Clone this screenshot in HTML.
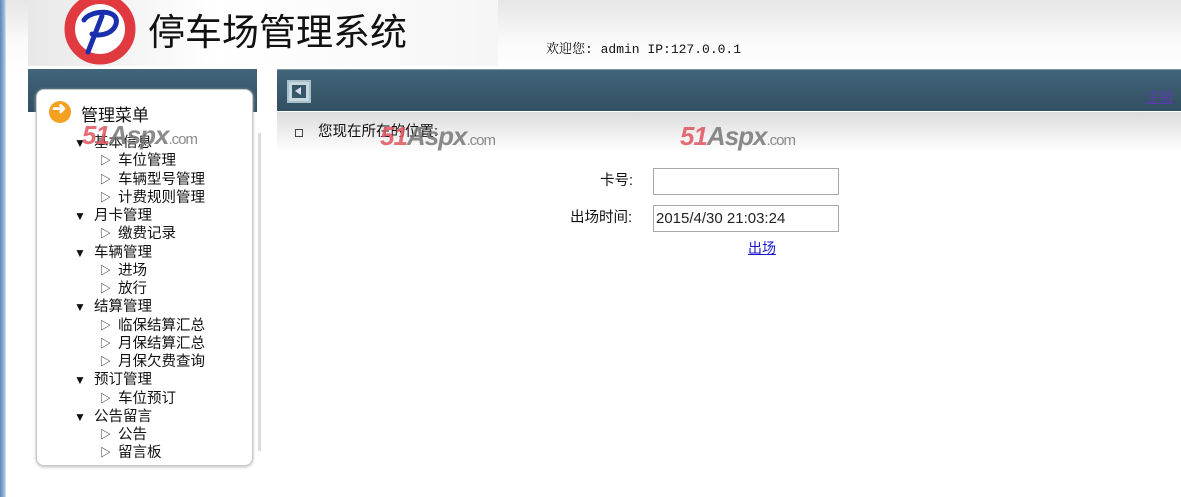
<!DOCTYPE html>
<html><head><meta charset="utf-8"><style>
*{margin:0;padding:0;box-sizing:border-box}
body{width:1181px;height:497px;position:relative;overflow:hidden;background:#fff;font-family:"Liberation Sans","Noto Sans CJK SC",sans-serif;}
.a{position:absolute}
.top{left:0;top:0;width:1181px;height:69px;background:linear-gradient(#e6e6e6,#fafafa 60%,#fff)}
.lstrip{left:0;top:0;width:6px;height:497px;background:linear-gradient(90deg,#5b86b8,#9bb8d8 70%,#dfe8f2)}
.bar{background:linear-gradient(#426579,#314f62);}
.t{font-size:14.5px;color:#111;line-height:18.2px;white-space:nowrap}
.r{position:relative;height:18.25px;font-size:14.5px;color:#111;line-height:18px;white-space:nowrap}
.r .tx{position:absolute;left:22px;top:0}
.r.s .tx{left:46px}
.r .tri{position:absolute;left:2px;top:0;font-size:12px;line-height:18px}
.r.s .tri{left:28px;font-size:11px}
.wm{position:absolute;font-family:"Liberation Sans",sans-serif;font-weight:bold;font-style:italic;font-size:26px;color:#e0555f;letter-spacing:-1px;opacity:.85}
.wm b{color:#777;font-style:italic}
.wm i{font-size:15px;color:#777;font-weight:normal;font-style:normal}
input{position:absolute;height:27px;border:1px solid #a9a9a9;font-family:"Liberation Sans",sans-serif;font-size:15px;padding-left:2px;color:#222}
</style></head><body>
<div class="a top"></div>
<div class="a lstrip"></div>
<div class="a" style="left:28px;top:0;width:470px;height:66px;background:linear-gradient(90deg,#e8e8e8,#fff 40%,#f6f6f6)"></div>
<svg class="a" style="left:62px;top:0" width="78" height="66" viewBox="0 0 78 66">
<circle cx="38" cy="29" r="30" fill="none" stroke="#e0393f" stroke-width="11"/>
<circle cx="38" cy="29" r="25" fill="#fff"/>
<path d="M22 20 C28 10 58 8 54 24 C50 36 34 36 30 34 M40 16 L26 52" stroke="#1a2fae" stroke-width="5" fill="none" stroke-linecap="round"/>
</svg>
<div class="a" style="left:148px;top:6px;font-size:37px;color:#111;font-family:'Noto Sans CJK SC',sans-serif;line-height:46px">停车场管理系统</div>
<div class="a" style="left:546px;top:38px;font-size:13px;color:#111;font-family:'Liberation Mono','Noto Serif CJK SC',monospace">欢迎您: admin IP:127.0.0.1</div>

<div class="a bar" style="left:28px;top:69px;width:229px;height:43px"></div>
<div class="a bar" style="left:277px;top:69px;width:904px;height:42px;border-top:1px solid #7b99a8"></div>
<div class="a" style="left:287px;top:80px;width:24px;height:23px;background:#c8d8e0;border:2px solid #a8c0cc"><div class="a" style="left:3px;top:3px;width:14px;height:13px;background:#36576a"></div><div class="a" style="left:6px;top:5px;width:0;height:0;border-top:4.5px solid transparent;border-bottom:4.5px solid transparent;border-right:6px solid #dde"></div></div>
<div class="a" style="left:1145px;top:87px;font-size:14px;color:#5a3ca8;text-decoration:underline">注销</div>
<div class="a" style="left:277px;top:112px;width:904px;height:40px;background:linear-gradient(#dcdcdc,#fff)"></div>
<div class="a" style="left:295px;top:129px;width:8px;height:8px;border:1px solid #444"></div>
<div class="a t" style="left:318px;top:123px">您现在所在的位置:</div>
<div class="wm" style="left:380px;top:121px">51<b>Aspx</b><i>.com</i></div>
<div class="wm" style="left:680px;top:121px">51<b>Aspx</b><i>.com</i></div>

<div class="a t" style="left:600px;top:172px">卡号:</div>
<input style="left:653px;top:168px;width:186px">
<div class="a t" style="left:570px;top:209px">出场时间:</div>
<input style="left:653px;top:205px;width:186px" value="2015/4/30 21:03:24">
<div class="a" style="left:748px;top:238px;font-size:14px;color:#1a1acc;text-decoration:underline">出场</div>

<div class="a" style="left:36px;top:89px;width:217px;height:377px;background:#fff;border:1px solid #c8c8c8;border-radius:8px;box-shadow:0 1px 3px #bbb"></div>
<div class="a" style="left:258px;top:133px;width:3px;height:318px;background:#ddd"></div>
<div class="a" style="left:49px;top:101px;width:22px;height:22px;border-radius:50%;background:#f4a020"></div>
<div class="a" style="left:52px;top:99px;color:#fff;font-size:17px;font-weight:bold">➜</div>
<div class="a" style="left:81px;top:101px;font-size:17px;color:#111">管理菜单</div>
<div class="a" style="left:72px;top:134px;width:180px">
<div class="r"><span class="tri">▼</span><span class="tx">基本信息</span></div>
<div class="r s"><span class="tri">▷</span><span class="tx">车位管理</span></div>
<div class="r s"><span class="tri">▷</span><span class="tx">车辆型号管理</span></div>
<div class="r s"><span class="tri">▷</span><span class="tx">计费规则管理</span></div>
<div class="r"><span class="tri">▼</span><span class="tx">月卡管理</span></div>
<div class="r s"><span class="tri">▷</span><span class="tx">缴费记录</span></div>
<div class="r"><span class="tri">▼</span><span class="tx">车辆管理</span></div>
<div class="r s"><span class="tri">▷</span><span class="tx">进场</span></div>
<div class="r s"><span class="tri">▷</span><span class="tx">放行</span></div>
<div class="r"><span class="tri">▼</span><span class="tx">结算管理</span></div>
<div class="r s"><span class="tri">▷</span><span class="tx">临保结算汇总</span></div>
<div class="r s"><span class="tri">▷</span><span class="tx">月保结算汇总</span></div>
<div class="r s"><span class="tri">▷</span><span class="tx">月保欠费查询</span></div>
<div class="r"><span class="tri">▼</span><span class="tx">预订管理</span></div>
<div class="r s"><span class="tri">▷</span><span class="tx">车位预订</span></div>
<div class="r"><span class="tri">▼</span><span class="tx">公告留言</span></div>
<div class="r s"><span class="tri">▷</span><span class="tx">公告</span></div>
<div class="r s"><span class="tri">▷</span><span class="tx">留言板</span></div>
</div>
<div class="wm" style="left:82px;top:120px">51<b>Aspx</b><i>.com</i></div>
</body></html>
